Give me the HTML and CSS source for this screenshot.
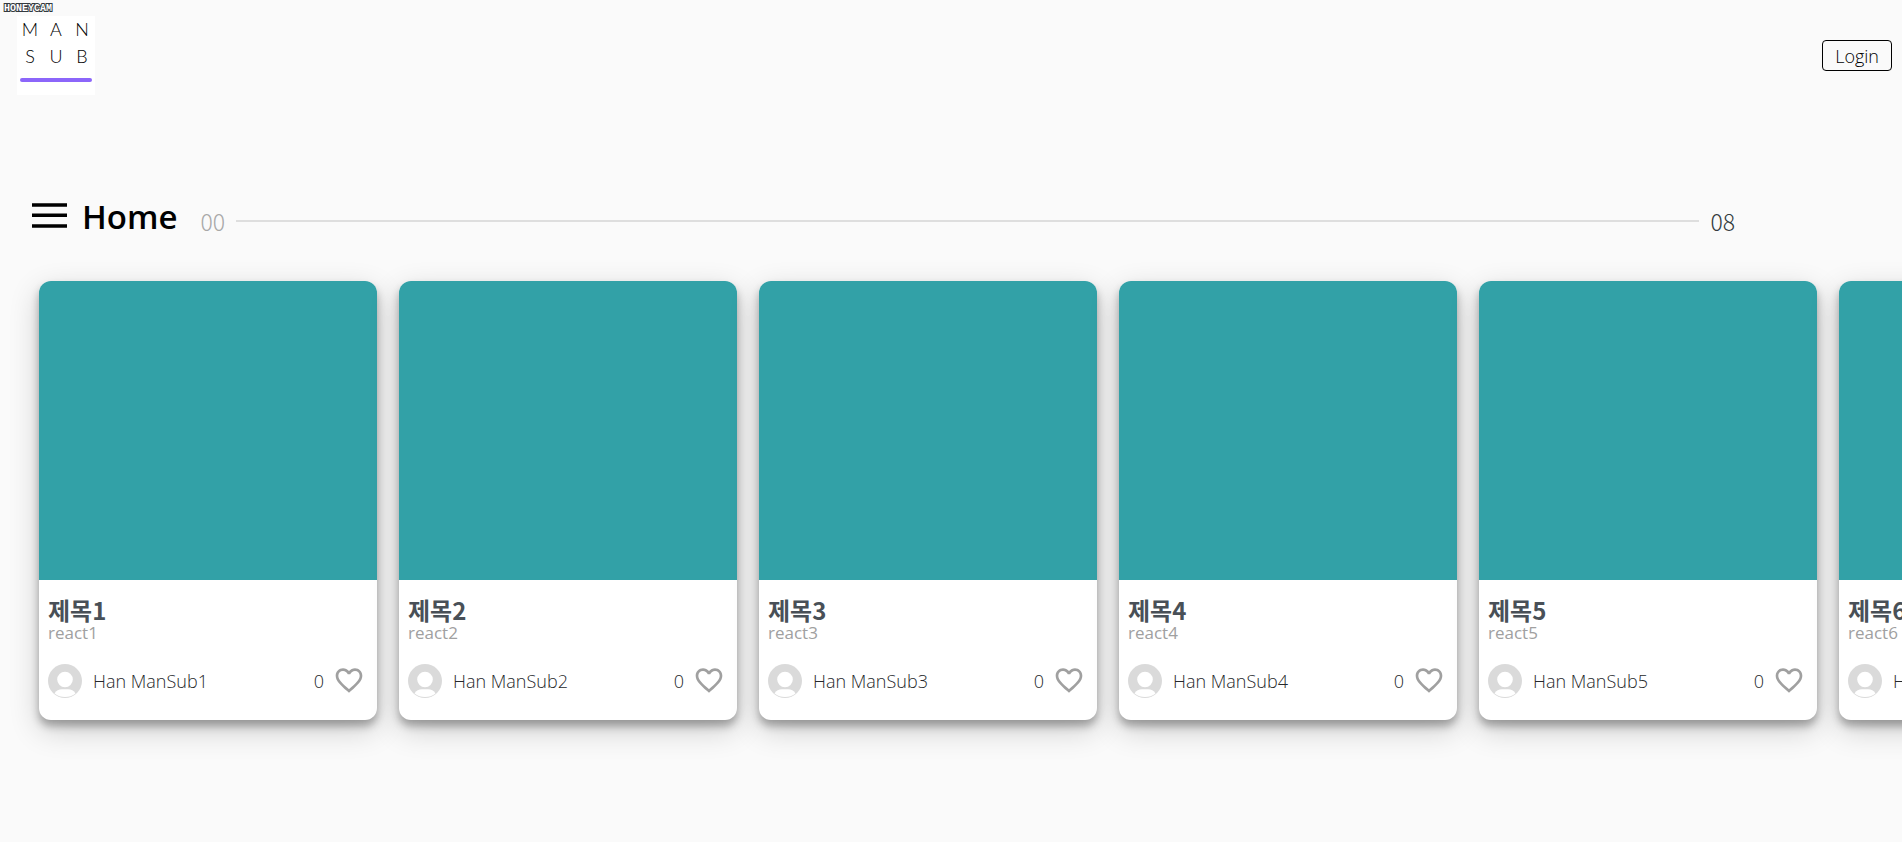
FILE: index.html
```html
<!DOCTYPE html>
<html lang="ko">
<head>
<meta charset="utf-8">
<meta name="viewport" content="width=device-width, initial-scale=1">
<title>Home</title>
<link rel="stylesheet" href="styles.css">
</head>
<body>
<svg class="sprite" aria-hidden="true">
  <symbol id="heart" viewBox="0 0 24 24"><path d="M16.5 3c-1.74 0-3.41.81-4.5 2.09C10.91 3.81 9.24 3 7.5 3 4.42 3 2 5.42 2 8.500c0 3.780 3.400 6.860 8.550 11.540L12 21.350l1.450-1.320C18.600 15.360 22 12.280 22 8.500 22 5.420 19.580 3 16.500 3zm-4.400 15.550l-.1.100-.1-.100C7.140 14.240 4 11.390 4 8.500 4 6.500 5.500 5 7.500 5c1.540 0 3.040.99 3.570 2.360h1.870C13.460 5.990 14.960 5 16.500 5c2 0 3.500 1.500 3.500 3.500 0 2.890-3.140 5.740-7.900 10.050z" transform="translate(0 -.5)"/></symbol>
  <symbol id="avatar" viewBox="0 0 34 34"><circle cx="17" cy="17" r="17" fill="#dadada"/><circle cx="17" cy="15.500" r="7.800" fill="#fff"/><path d="M6.500 29.500C8 26.500 11 25.200 14 25.200h6c3 0 6 1.300 7.500 4.300C24.500 32 21 33 17 33S9.500 32 6.500 29.500z" fill="#fff"/></symbol>
</svg>
<span class="watermark">HONEYCAM</span>
<header class="topbar">
  <a class="logo" href="#" aria-label="MAN SUB">
    <span class="logo-letters"><span>M</span><span>A</span><span>N</span><span>S</span><span>U</span><span>B</span></span>
    <span class="logo-line"></span>
  </a>
  <button class="login" type="button">Login</button>
</header>
<main>
  <div class="heading">
    <button class="menu" type="button" aria-label="Menu"><svg viewBox="0 0 48 48"><path d="M6 11.300h35v3.400H6zM6 21.500h35v3.400H6zM6 32.200h35v3.600H6z"/></svg></button>
    <h1>Home</h1>
    <div class="progress"><span class="start">00</span><span class="track"></span><span class="end">08</span></div>
  </div>
  <section class="cards">
    <article class="card"><div class="cover"></div><div class="body"><h2>제목1</h2><p class="tag">react1</p><div class="meta"><svg class="avatar"><use href="#avatar"/></svg><span class="name">Han ManSub1</span><span class="count">0</span><button class="like" type="button" aria-label="Like"><svg><use href="#heart"/></svg></button></div></div></article>
    <article class="card"><div class="cover"></div><div class="body"><h2>제목2</h2><p class="tag">react2</p><div class="meta"><svg class="avatar"><use href="#avatar"/></svg><span class="name">Han ManSub2</span><span class="count">0</span><button class="like" type="button" aria-label="Like"><svg><use href="#heart"/></svg></button></div></div></article>
    <article class="card"><div class="cover"></div><div class="body"><h2>제목3</h2><p class="tag">react3</p><div class="meta"><svg class="avatar"><use href="#avatar"/></svg><span class="name">Han ManSub3</span><span class="count">0</span><button class="like" type="button" aria-label="Like"><svg><use href="#heart"/></svg></button></div></div></article>
    <article class="card"><div class="cover"></div><div class="body"><h2>제목4</h2><p class="tag">react4</p><div class="meta"><svg class="avatar"><use href="#avatar"/></svg><span class="name">Han ManSub4</span><span class="count">0</span><button class="like" type="button" aria-label="Like"><svg><use href="#heart"/></svg></button></div></div></article>
    <article class="card"><div class="cover"></div><div class="body"><h2>제목5</h2><p class="tag">react5</p><div class="meta"><svg class="avatar"><use href="#avatar"/></svg><span class="name">Han ManSub5</span><span class="count">0</span><button class="like" type="button" aria-label="Like"><svg><use href="#heart"/></svg></button></div></div></article>
    <article class="card"><div class="cover"></div><div class="body"><h2>제목6</h2><p class="tag">react6</p><div class="meta"><svg class="avatar"><use href="#avatar"/></svg><span class="name">Han ManSub6</span><span class="count">0</span><button class="like" type="button" aria-label="Like"><svg><use href="#heart"/></svg></button></div></div></article>
  </section>
</main>
</body>
</html>
```

FILE: styles.css
```css
* { box-sizing: border-box; }
body {
  margin: 0;
  background: #fafafa;
  color: #495057;
  font-family: "Open Sans", "Noto Sans CJK KR", sans-serif;
  overflow-x: hidden;
}
h1, h2, p { margin: 0; }
button { font: inherit; cursor: pointer; }
svg { display: block; }
.sprite { position: absolute; width: 0; height: 0; }
.watermark {
  position: absolute;
  top: 4px;
  left: 4px;
  font: bold 10px/10px "Liberation Mono", monospace;
  color: #fff;
  -webkit-text-stroke: 2px #343a40;
  paint-order: stroke fill;
}
.topbar {
  display: flex;
  align-items: center;
  justify-content: space-between;
  padding: 16px 10px 16px 17px;
}
.logo {
  display: flex;
  flex-direction: column;
  width: 78px;
  height: 79px;
  background: #fff;
  color: #000;
  text-decoration: none;
}
.logo-letters {
  display: grid;
  grid-template-columns: repeat(3, 1fr);
  font: 300 18px/27px Lato, sans-serif;
  text-align: center;
}
.logo-line { height: 4px; margin: 8px 3px 0; border-radius: 2px; background: #8c66fa; }
.login {
  height: 31px;
  padding: 0 12px;
  border: 1px solid #000;
  border-radius: 4px;
  background: none;
  color: #000;
  font-size: 18px;
  font-weight: 300;
  line-height: 28px;
}
.heading { display: flex; align-items: center; padding: 81px 167px 0 26px; }
.menu { width: 48px; height: 48px; padding: 0; border: 0; background: none; }
.menu svg { width: 48px; height: 48px; }
h1 { margin-left: 8px; padding-top: 2px; color: #000; font-size: 33px; font-weight: 700; line-height: 46px; font-family: "Open Sans", sans-serif; font-weight: 600; }
.progress {
  display: flex;
  flex: 1;
  align-items: center;
  gap: 11px;
  margin-left: 23px;
  padding-top: 10px;
  font-family: "Noto Sans CJK KR", sans-serif;
  font-size: 23px;
  font-weight: 300;
  line-height: 32px;
}
.start { color: #a8a8a8; }
.end { color: #343a40; }
.track { flex: 1; height: 2px; background: #dedede; }
.cards { display: flex; gap: 22px; padding: 41px 0 60px 39px; overflow: hidden; }
.card {
  flex: none;
  width: 338px;
  border-radius: 12px;
  background: #fff;
  box-shadow: 0 10px 30px rgba(0, 0, 0, 0.19), 0 6px 8px rgba(0, 0, 0, 0.3);
}
.cover { height: 299px; border-radius: 12px 12px 0 0; background: #32a1a7; }
.body { padding: 16px 12px 22px 9px; }
h2 { font-size: 24px; font-weight: 700; line-height: 28px; font-family: "Noto Sans CJK KR", sans-serif; }
.tag { color: #a0a0a0; font-size: 17px; line-height: 18px; }
.meta { display: flex; align-items: center; margin-top: 22px; color: #25282b; }
.avatar { width: 34px; height: 34px; }
.name { margin-left: 11px; font-size: 18px; font-weight: 300; }
.count { margin-left: auto; font-size: 18px; font-weight: 300; }
.like { width: 32px; height: 32px; margin-left: 9px; padding: 0; border: 0; background: none; fill: #a0a0a0; }
.like svg { width: 32px; height: 32px; }
```
